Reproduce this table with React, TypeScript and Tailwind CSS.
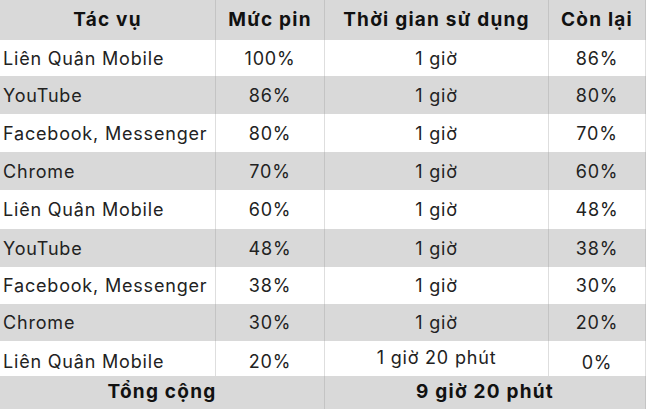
import React from "react";

const rows: [string, string, string, string][] = [
  ["Liên Quân Mobile", "100%", "1 giờ", "86%"],
  ["YouTube", "86%", "1 giờ", "80%"],
  ["Facebook, Messenger", "80%", "1 giờ", "70%"],
  ["Chrome", "70%", "1 giờ", "60%"],
  ["Liên Quân Mobile", "60%", "1 giờ", "48%"],
  ["YouTube", "48%", "1 giờ", "38%"],
  ["Facebook, Messenger", "38%", "1 giờ", "30%"],
  ["Chrome", "30%", "1 giờ", "20%"],
  ["Liên Quân Mobile", "20%", "1 giờ 20 phút", "0%"],
];

const heights = ["h-[36px]", "h-[38px]", "h-[38px]", "h-[38px]", "h-[39px]", "h-[38px]", "h-[37px]", "h-[37px]", "h-[35px]"];

const head = "bg-[#d9d9d9] border-r border-[#c4c4c4] flex items-center justify-center font-bold text-[#111] text-[19px] tracking-[0.065em]";

export default function App() {
  return (
    <div
      className="w-[650px] h-[410px] bg-white text-[#222] overflow-hidden"
      style={{ fontFamily: "Inter, 'Noto Sans', sans-serif" }}
    >
      <div className="w-[646px] grid grid-cols-[216px_109px_224px_97px] text-[18px] tracking-[0.045em]">
        <div className={`h-[40px] ${head}`}>Tác vụ</div>
        <div className={`h-[40px] ${head}`}>Mức pin</div>
        <div className={`h-[40px] ${head}`}>Thời gian sử dụng</div>
        <div className={`h-[40px] ${head}`}>Còn lại</div>
        {rows.map((r, i) => {
          const grey = i % 2 === 1;
          const bg = grey ? "bg-[#d9d9d9] border-[#c4c4c4]" : "bg-white border-[#dedede]";
          const h = heights[i];
          const last = i === rows.length - 1;
          return (
            <React.Fragment key={i}>
              <div className={`${h} ${bg} border-r flex items-center pl-[3px] ${last ? "pt-[6px]" : ""}`}>{r[0]}</div>
              <div className={`${h} ${bg} border-r flex items-center justify-center ${last ? "pt-[6px]" : ""}`}>{r[1]}</div>
              <div className={`${h} ${bg} border-r flex items-center justify-center ${last ? "pb-[2px]" : ""}`}>{r[2]}</div>
              <div className={`${h} ${bg} border-r flex items-center justify-center ${last ? "pt-[8px]" : ""}`}>{r[3]}</div>
            </React.Fragment>
          );
        })}
        <div className={`col-span-2 h-[33px] ${head}`}>Tổng cộng</div>
        <div className={`col-span-2 h-[33px] ${head}`}>9 giờ 20 phút</div>
      </div>
    </div>
  );
}
